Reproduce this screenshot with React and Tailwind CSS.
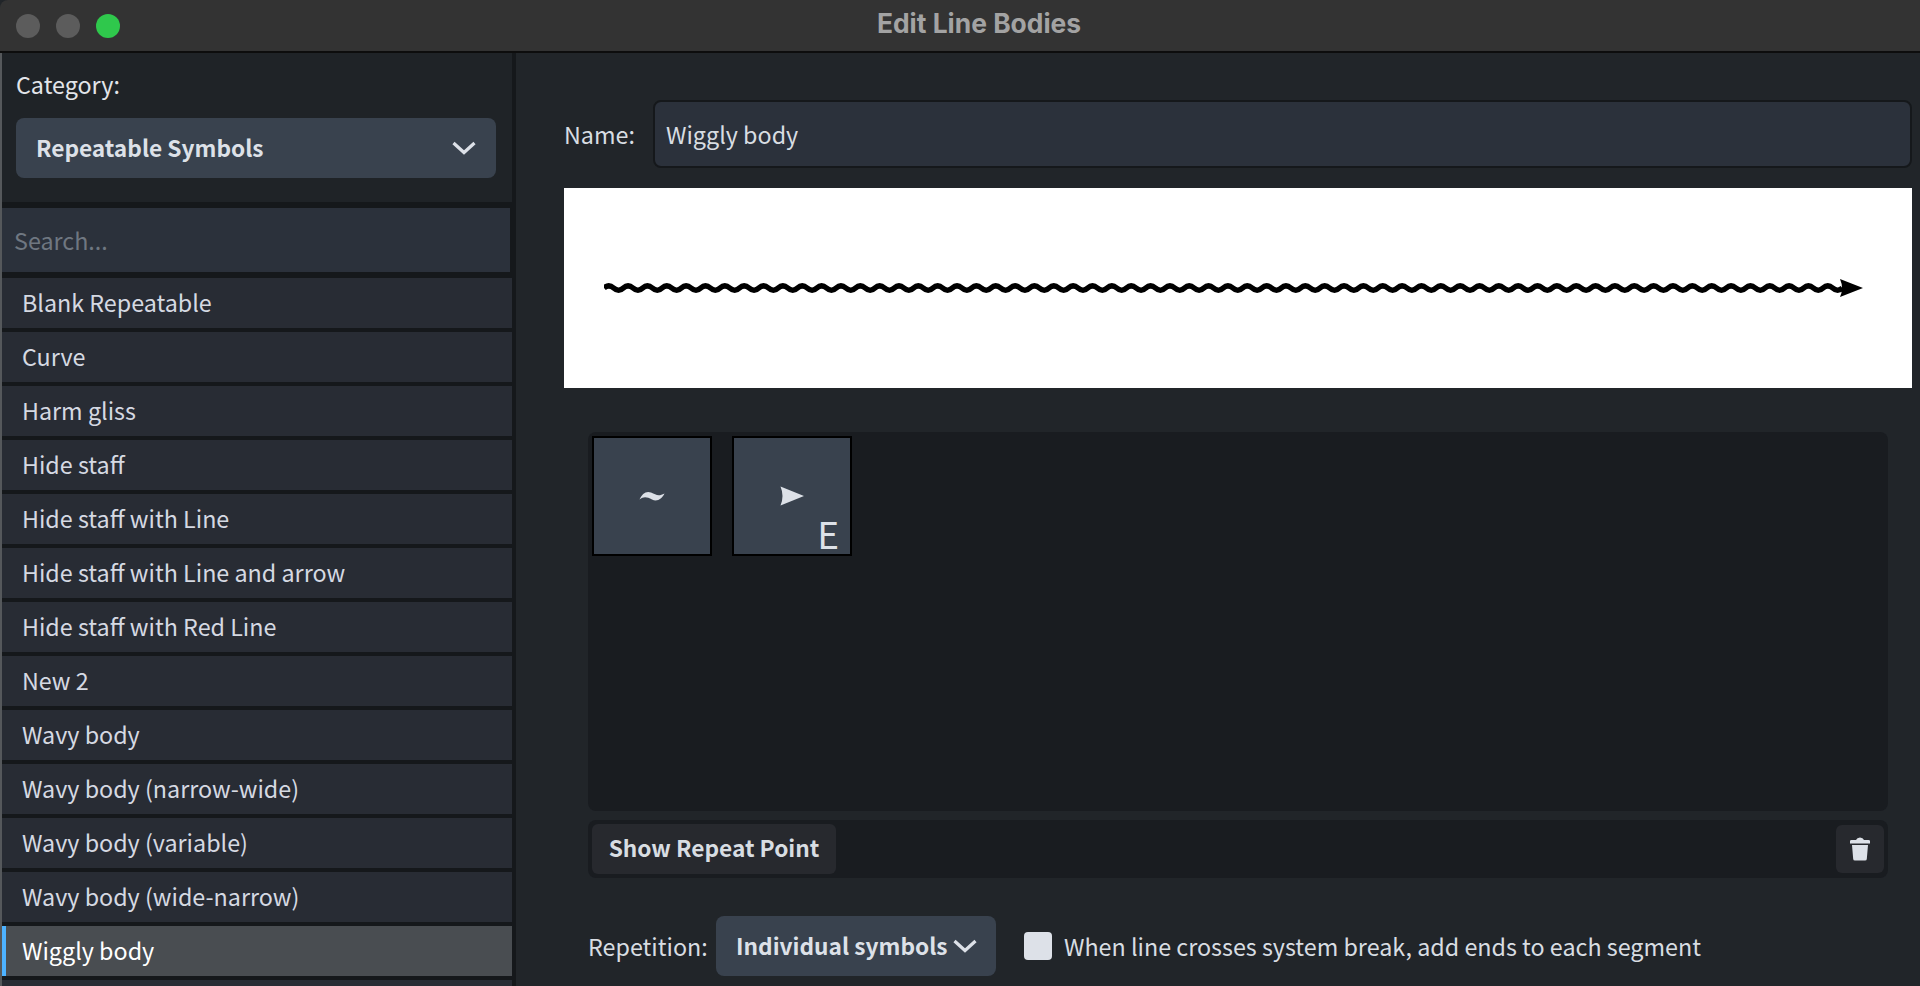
const font = { fontFamily: '"Noto Sans CJK SC", "Noto Sans", sans-serif' };

const items = [
  "Blank Repeatable",
  "Curve",
  "Harm gliss",
  "Hide staff",
  "Hide staff with Line",
  "Hide staff with Line and arrow",
  "Hide staff with Red Line",
  "New 2",
  "Wavy body",
  "Wavy body (narrow-wide)",
  "Wavy body (variable)",
  "Wavy body (wide-narrow)",
  "Wiggly body",
];

function Chevron({ className }) {
  return (
    <svg viewBox="0 0 24 14" className={className} fill="none" stroke="#dde1e8" strokeWidth="3.2">
      <path d="M1.5 2 L12 11.5 L22.5 2" />
    </svg>
  );
}

function wave() {
  const period = 19.35;
  const n = 64;
  let d = "M0 8";
  for (let i = 0; i < n; i++) {
    const x = i * period;
    d += ` C${(x + 3.2).toFixed(2)} 5 ${(x + 6.2).toFixed(2)} 5 ${(x + period / 2).toFixed(2)} 8`;
    d += ` C${(x + 13).toFixed(2)} 11 ${(x + 16.2).toFixed(2)} 11 ${(x + period).toFixed(2)} 8`;
  }
  return d;
}

export default function App() {
  return (
    <div className="w-[1920px] h-[986px] overflow-hidden flex flex-col bg-[#212529]" style={font}>
      {/* Title bar */}
      <div className="h-[53px] shrink-0 relative flex items-center bg-[#333333] border-b-2 border-[#0d0d0d] rounded-tl-[8px]">
        <div className="flex gap-[16px] pl-[16px]">
          <div className="w-[24px] h-[24px] rounded-full bg-[#5c5c5c]" />
          <div className="w-[24px] h-[24px] rounded-full bg-[#5c5c5c]" />
          <div className="w-[24px] h-[24px] rounded-full bg-[#2fc84c]" />
        </div>
        <div className="absolute inset-0 flex items-center justify-center pb-[4px] pl-[38px] text-[26.4px] font-bold text-[#a3a3a3]" style={{ fontFamily: "Inter, sans-serif" }}>
          Edit Line Bodies
        </div>
      </div>

      <div className="flex flex-1 min-h-0">
        {/* Sidebar */}
        <div className="w-[516px] shrink-0 flex bg-[#212529] border-l-2 border-[#55585b]">
          <div className="w-[510px] shrink-0 flex flex-col bg-[#15181b]">
            <div className="h-[149px] shrink-0 bg-[#1f2327] pl-[14px] pr-[16px]">
              <div className="h-[63px] flex items-center text-[23.3px] text-[#e2e5ea]">Category:</div>
              <div className="mt-[2px] h-[60px] rounded-[8px] bg-[#39424e] flex items-center justify-between pl-[20px] pr-[20px]">
                <span className="text-[22.7px] font-bold text-[#dde1e8]">Repeatable Symbols</span>
                <Chevron className="w-[24px] h-[14px]" />
              </div>
            </div>
            <div className="mt-[6px] w-[508px] h-[64px] shrink-0 bg-[#2b313b] flex items-center pl-[12px] text-[23.3px] text-[#6f7781]">
              Search...
            </div>
            <div className="mt-[6px] flex flex-col gap-[4px]">
              {items.map((t) => {
                const sel = t === "Wiggly body";
                return (
                  <div
                    key={t}
                    className={
                      sel
                        ? "h-[50px] shrink-0 flex items-center bg-[#494d51] border-l-[4px] border-[#4db2ff] pl-[16px] pb-[1px] text-[23.3px] text-white"
                        : "h-[50px] shrink-0 flex items-center bg-[#282c34] pl-[20px] pb-[1px] text-[23.3px] text-[#d5d9e2]"
                    }
                  >
                    {t}
                  </div>
                );
              })}
              <div className="h-[50px] shrink-0 bg-[#282c34]" />
            </div>
          </div>
          <div className="w-[4px] bg-[#15181b]" />
        </div>

        {/* Main */}
        <div className="flex-1 min-w-0 pl-[48px] pr-[8px]">
          <div className="flex items-center h-[68px] mt-[47px]">
            <span className="w-[89px] shrink-0 text-[23.3px] text-[#d8dde2]">Name:</span>
            <div className="flex-1 h-[68px] rounded-[8px] bg-[#2b313b] border-2 border-[#15181b] flex items-center pl-[11px] text-[23.3px] text-[#d8dde2]">
              Wiggly body
            </div>
          </div>

          <div className="mt-[20px] h-[200px] bg-white flex items-center pl-[40px]">
            <svg width="1262" height="24" viewBox="0 0 1262 24">
              <clipPath id="c">
                <rect x="0" y="-10" width="1240" height="60" />
              </clipPath>
              <g clipPath="url(#c)">
                <path d={wave()} transform="translate(0 4)" fill="none" stroke="#000" strokeWidth="5.4" />
              </g>
              <path d="M1236 3 L1259 12 L1236 21 Q1240 12 1236 3 Z" fill="#000" />
            </svg>
          </div>

          <div className="px-[24px]">
            <div className="mt-[44px] h-[379px] rounded-[8px] bg-[#191c20] p-[4px] flex gap-[20px] items-start">
              <div className="w-[120px] h-[120px] bg-[#39424e] border-2 border-black flex items-center justify-center">
                <svg width="26" height="12" viewBox="0 0 26 12">
                  <path d="M0.500 9.500 C3 4 7 0.500 12 2.500 S19 7 25.500 3.500 C23 9 18 12 13 9.500 S5 6 0.500 9.500 Z" fill="#dde1e8" />
                </svg>
              </div>
              <div className="w-[120px] h-[120px] bg-[#39424e] border-2 border-black relative flex items-center justify-center">
                <svg width="24" height="20" viewBox="0 0 24 20">
                  <path d="M0.500 0.500 L24 10 L0.500 19.500 Q4.500 10 0.500 0.500 Z" fill="#dde1e8" />
                </svg>
                <span className="absolute right-[11px] bottom-[-1px] text-[37px] leading-[44px] text-[#dde1e8]">
                  E
                </span>
              </div>
            </div>

            <div className="mt-[9px] h-[58px] rounded-[8px] bg-[#191c20] px-[4px] flex items-center justify-between">
              <div className="w-[244px] h-[50px] rounded-[6px] bg-[#27292e] flex items-center justify-center pb-[1px] text-[22.7px] font-bold text-[#d8dde2]">
                Show Repeat Point
              </div>
              <div className="w-[48px] h-[48px] rounded-[6px] bg-[#27292e] flex items-center justify-center">
                <svg width="22" height="24" viewBox="0 0 22 24">
                  <path d="M1 4 Q1 3 2.500 3 L7 3 Q8 0.500 11 0.500 Q14 0.500 15 3 L19.500 3 Q21 3 21 4 L21 6.500 L1 6.500 Z" fill="#dde1e8" />
                  <path d="M3 8 L19 8 L17.800 22 Q17.700 23.500 16 23.500 L6 23.500 Q4.300 23.500 4.200 22 Z" fill="#dde1e8" />
                </svg>
              </div>
            </div>

            <div className="mt-[38px] h-[60px] flex items-center">
              <span className="w-[128px] shrink-0 text-[23.3px] text-[#d8dde2]">Repetition:</span>
              <div className="w-[280px] h-[60px] rounded-[8px] bg-[#39424e] flex items-center pl-[20px] gap-[5px]">
                <span className="text-[22.7px] font-bold text-[#dde1e8]">Individual symbols</span>
                <Chevron className="w-[24px] h-[14px]" />
              </div>
              <div className="ml-[28px] w-[28px] h-[28px] rounded-[4px] bg-[#dde1e8]" />
              <span className="ml-[12px] text-[23.3px] text-[#d8dde2]">When line crosses system break, add ends to each segment</span>
            </div>
          </div>
        </div>
      </div>
    </div>
  );
}
